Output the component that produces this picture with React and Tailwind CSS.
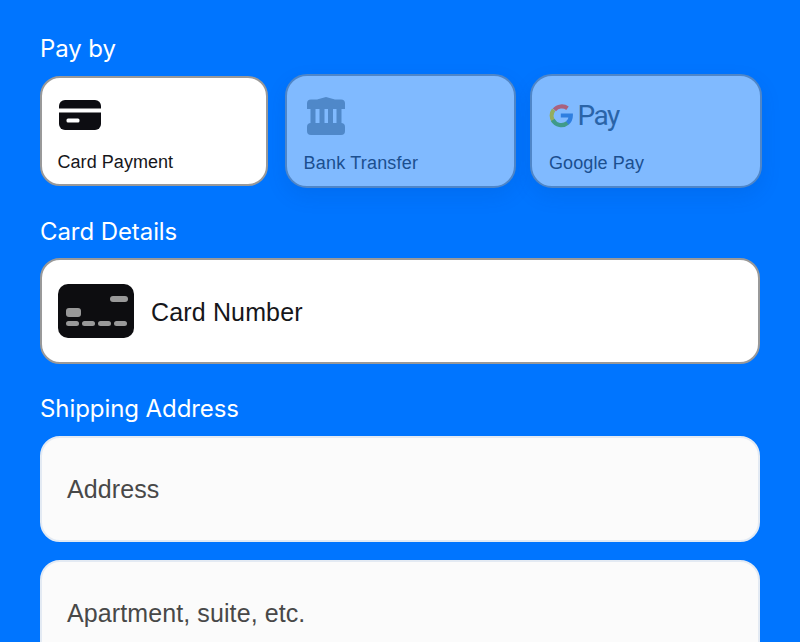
import React from "react";

const CardIcon = () => (
  <svg width="42" height="30" viewBox="0 0 42 30" className="block">
    <path d="M0 8.500V6a6 6 0 0 1 6-6h30a6 6 0 0 1 6 6v2.500z" fill="#0d0d12" />
    <path d="M0 12.500h42V24a6 6 0 0 1-6 6H6a6 6 0 0 1-6-6z" fill="#0d0d12" />
    <rect x="7.500" y="18.500" width="13" height="4" rx="1.500" fill="#ffffff" />
  </svg>
);

const BankIcon = () => (
  <svg width="38" height="38" viewBox="0 0 38 38" className="block" fill="#4f88c9">
    <path d="M19 0l9 2.500h6a4 4 0 0 1 4 4V12H0V6.500a4 4 0 0 1 4-4h6z" />
    <rect x="3.500" y="12" width="5" height="15" />
    <rect x="12.500" y="12" width="5" height="15" />
    <rect x="21" y="12" width="5" height="15" />
    <rect x="29.500" y="12" width="5" height="15" />
    <rect x="0" y="26" width="38" height="12" rx="4" />
  </svg>
);

const GoogleG = () => (
  <svg width="24" height="25" viewBox="0 0 24 24" className="block" fill="none" strokeWidth="4.200">
    <path d="M5.400 6.400A9.700 9.700 0 0 1 18.500 4.700" stroke="#a9627f" />
    <path d="M4.700 18A9.700 9.700 0 0 1 4.700 6.200" stroke="#94ad5c" />
    <path d="M18.600 19.400A9.700 9.700 0 0 1 3.800 16.500" stroke="#3f9a8a" />
    <path d="M11.800 12H21.800C21.800 15 20.500 17.800 18.300 19.500" stroke="#2f7fe0" />
  </svg>
);

const BigCardIcon = () => (
  <div className="flex h-[54px] w-[76px] flex-col rounded-[10px] bg-[#0d0d10] pl-[8px] pr-[6px]">
    <div className="mt-[12px] h-[6px] w-[18px] self-end rounded-full bg-[#999999]" />
    <div className="mt-[6px] h-[9px] w-[15px] rounded-[3px] bg-[#999999]" />
    <div className="mt-[4px] flex gap-[3px]">
      <div className="h-[5px] w-[13px] rounded-full bg-[#999999]" />
      <div className="h-[5px] w-[13px] rounded-full bg-[#999999]" />
      <div className="h-[5px] w-[13px] rounded-full bg-[#999999]" />
      <div className="h-[5px] w-[13px] rounded-full bg-[#999999]" />
    </div>
  </div>
);

const Label = ({ children }) => (
  <h2 className="font-['Inter',sans-serif] text-[24px] leading-[28px] tracking-[-0.08px] text-white">
    {children}
  </h2>
);

const AddressField = ({ children, className }) => (
  <div
    className={`flex h-[106px] shrink-0 items-center rounded-[20px] border-2 border-[#e3eaf3] bg-[#fbfbfb] pl-[25px] pt-[2px] text-[25px] tracking-[0.1px] text-[#484848] ${className}`}
  >
    {children}
  </div>
);

export default function App() {
  return (
    <div className="flex h-[642px] w-[800px] flex-col overflow-hidden bg-[#0075ff] pl-[40px] pr-[40px] pt-[35px] font-['Liberation_Sans',sans-serif]">
      {/* pay by */}
      <Label>Pay by</Label>
      <div className="mt-[11px] flex w-[722px] items-center">
        <div className="flex h-[110px] w-[228px] flex-col rounded-[20px] border-[2.5px] border-[#999999] bg-white pl-[15.5px] pt-[21.5px] text-[#16161a]">
          <div className="ml-[1px]">
            <CardIcon />
          </div>
          <span className="mt-[21px] text-[18px] leading-[22px] tracking-[0.05px]">Card Payment</span>
        </div>
        <div className="ml-[17px] flex h-[114px] w-[231px] flex-col rounded-[22px] border-[2.5px] border-[#4f86c8] bg-[#80baff] pl-[16.5px] pt-[20.5px] text-[#1b4f8f] shadow-[0_8px_20px_rgba(0,60,140,0.12)]">
          <div className="ml-[3px]">
            <BankIcon />
          </div>
          <span className="mt-[17px] text-[18px] leading-[22px] tracking-[0.2px]">Bank Transfer</span>
        </div>
        <div className="ml-[14px] flex h-[114px] w-[232px] flex-col rounded-[22px] border-[2.5px] border-[#4f86c8] bg-[#80baff] pl-[16.5px] pt-[20.5px] text-[#1b4f8f] shadow-[0_8px_20px_rgba(0,60,140,0.12)]">
          <div className="flex h-[38px] items-center gap-[5px]">
            <GoogleG />
            <span className="font-['Roboto',sans-serif] text-[28px] leading-[34px] tracking-[-1.500px] text-[#2a64a8]">
              Pay
            </span>
          </div>
          <span className="mt-[17px] ml-[0.5px] text-[18px] leading-[22px] tracking-[0.1px]">Google Pay</span>
        </div>
      </div>

      {/* card details */}
      <div className="mt-[30px]">
        <Label>Card Details</Label>
      </div>
      <div className="mt-[12px] flex h-[106px] shrink-0 items-center rounded-[20px] border-[2.5px] border-[#999999] bg-white pl-[15.5px] text-[#16161a]">
        <BigCardIcon />
        <span className="ml-[17.500px] pt-[3px] text-[25px] tracking-[0.15px]">Card Number</span>
      </div>

      {/* shipping */}
      <div className="mt-[31px]">
        <Label>Shipping Address</Label>
      </div>
      <AddressField className="mt-[13px]">Address</AddressField>
      <AddressField className="mt-[18px]">Apartment, suite, etc.</AddressField>
    </div>
  );
}
